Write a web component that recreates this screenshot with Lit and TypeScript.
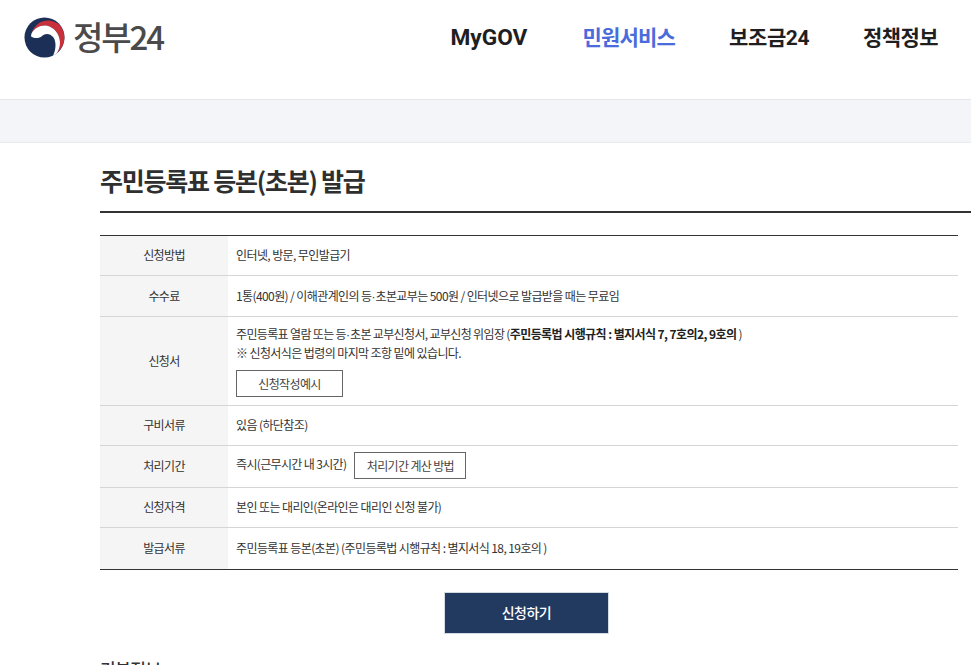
import { LitElement, html, css } from "lit";
import { customElement } from "lit/decorators.js";

@customElement("app-root")
export class AppRoot extends LitElement {
  static styles = css`
    :host { display: block; width: 971px; height: 665px; overflow: hidden; background: #fff; font-family: "Noto Sans CJK KR", "Noto Sans", sans-serif; color: #333; }
    .header { display: flex; align-items: flex-start; justify-content: space-between; box-sizing: border-box; padding: 16px 33px 0 24px; border-bottom: 1px solid #e4e6ea; height: 100px; }
    .logo { display: flex; align-items: center; gap: 8px; height: 42px; }
    .logo-text { font-size: 33px; font-weight: 500; color: #4a4a4a; letter-spacing: -2.1px; line-height: 40px; margin-top: -2px; }
    nav { display: flex; gap: 54px; padding-top: 7px; }
    nav a { font-size: 21px; font-weight: 700; color: #1f1f1f; line-height: 30px; letter-spacing: -0.4px; font-family: Roboto, "Noto Sans CJK KR", sans-serif; }
    nav a.latin { font-size: 22.7px; letter-spacing: 0; margin-right: 1px; }
    nav a.on { color: #4a6bdc; letter-spacing: -0.8px; }
    nav a.last { letter-spacing: -0.6px; }
    .band { height: 42px; background: #f3f5f9; border-bottom: 1px solid #e8eaee; }
    .main { padding: 0 0 0 100px; }
    h1 { margin: 0; font-size: 25px; font-weight: 700; letter-spacing: -1.25px; color: #2f2f2f; line-height: 36px; padding-top: 19px; padding-bottom: 13px; border-bottom: 2px solid #333; }
    .table { margin-top: 22px; width: 858px; border-top: 1px solid #333; border-bottom: 1px solid #333; font-size: 12px; letter-spacing: -0.65px; line-height: 19px; }
    .row { display: grid; grid-template-columns: 128px 1fr; border-bottom: 1px solid #d5d5d5; }
    .row:last-child { border-bottom: 0; }
    .th { background: #f5f5f5; display: flex; align-items: center; justify-content: center; padding-bottom: 2px; }
    .td { padding: 0 8px 2px; display: flex; flex-direction: column; justify-content: center; align-items: flex-start; letter-spacing: -0.6px; }
    .td.inline { flex-direction: row; align-items: center; justify-content: flex-start; gap: 8px; letter-spacing: -0.65px; }
    .l1 { letter-spacing: -0.65px; }
    .btn { box-sizing: border-box; border: 1px solid #666; height: 27px; display: flex; align-items: center; justify-content: center; color: #444; background: #fff; letter-spacing: -0.65px; }
    .b1 { width: 107px; margin-top: 8px; }
    .b2 { width: 112px; }
    .up { margin-bottom: 4px; }
    .dot { font-family: "Liberation Sans", sans-serif; letter-spacing: 0; line-height: 0; }
    b { font-weight: 700; color: #222; letter-spacing: -0.58px; }
    .apply-wrap { display: flex; width: 858px; margin-top: 22px; padding-left: 344px; box-sizing: border-box; }
    .apply { width: 165px; height: 42px; box-sizing: border-box; background: #233a60; border: 1px solid #d5d9e2; color: #fff; font-size: 14px; font-weight: 500; letter-spacing: -0.5px; display: flex; align-items: center; justify-content: center; padding-bottom: 2px; }
    h2 { margin: 23px 0 0; font-size: 17px; font-weight: 500; color: #333; letter-spacing: -0.5px; line-height: 24px; }
  `;

  private row(label: string, body: unknown, h: number, inline = false) {
    return html`<div class="row" style="height:${h}px">
      <div class="th">${label}</div>
      <div class="td ${inline ? "inline" : ""}">${body}</div>
    </div>`;
  }

  render() {
    const dot = html`<span class="dot">·</span>`;
    return html`
      <div class="header">
        <div class="logo">
          <svg width="41" height="41" viewBox="0 0 41 41" aria-hidden="true">
            <circle cx="20.5" cy="20.5" r="20" fill="#1b2f57"/>
            <path d="M7.5 16.5 C10 8 17 3.5 24 3.5 C29 3.5 34 6 37 9.5 A20 20 0 0 1 33 36 C36 31 36.5 26 35.5 22 C34 14 27 8.5 21 8.5 C15 8.5 10 11.5 7.5 16.5 Z" fill="#c8303c"/>
            <path d="M7.5 16.5 C10 11.5 15 8.5 21 8.5 C27 8.5 34 14 35.5 22 C36.5 26 36 31 33 36 A20 20 0 0 1 29 38.6 C32 33 32.5 25 29.5 20.5 C26 16 21 16 18 19 C15 22 10 21 7.5 20 C7 19 7 18 7.5 16.5 Z" fill="#fff"/>
          </svg>
          <span class="logo-text">정부24</span>
        </div>
        <nav>
          <a class="latin">MyGOV</a><a class="on">민원서비스</a><a>보조금24</a><a class="last">정책정보</a>
        </nav>
      </div>
      <div class="band"></div>
      <div class="main">
        <h1>주민등록표 등본(초본) 발급</h1>
        <div class="table">
          ${this.row("신청방법", "인터넷, 방문, 무인발급기", 39)}
          ${this.row("수수료", html`<div>1통(400원) / 이해관계인의 등${dot}초본교부는 500원 / 인터넷으로 발급받을 때는 무료임</div>`, 40)}
          ${this.row("신청서", html`<div class="l1">주민등록표 열람 또는 등${dot}초본 교부신청서, 교부신청 위임장 (<b>주민등록법 시행규칙 : 별지서식 7, 7호의2, 9호의</b> )</div>
            <div>※ 신청서식은 법령의 마지막 조항 밑에 있습니다.</div>
            <div class="btn b1">신청작성예시</div>`, 88)}
          ${this.row("구비서류", "있음 (하단참조)", 39)}
          ${this.row("처리기간", html`<span class="up">즉시(근무시간 내 3시간)</span><div class="btn b2">처리기간 계산 방법</div>`, 41, true)}
          ${this.row("신청자격", "본인 또는 대리인(온라인은 대리인 신청 불가)", 39)}
          ${this.row("발급서류", "주민등록표 등본(초본) (주민등록법 시행규칙 : 별지서식 18, 19호의 )", 41)}
        </div>
        <div class="apply-wrap"><div class="apply">신청하기</div></div>
        <h2>기본정보</h2>
      </div>
    `;
  }
}
